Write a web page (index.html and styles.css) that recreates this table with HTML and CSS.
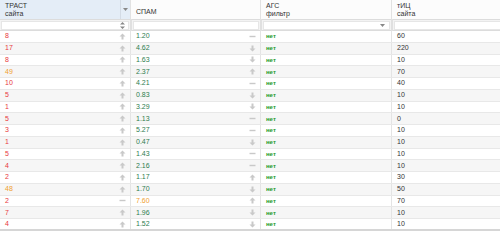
FILE: index.html
```html
<!DOCTYPE html>
<html lang="ru">
<head>
<meta charset="utf-8">
<title>Сайты</title>
<link rel="stylesheet" href="styles.css">
</head>
<body>
<svg width="0" height="0" class="defs">
	<symbol id="up" viewBox="0 0 7 7"><path d="M3.5 0.5 L0.5 3.5 H2.5 V6.5 H4.5 V3.5 H6.5 Z"/></symbol>
	<symbol id="down" viewBox="0 0 7 7"><path d="M3.5 6.5 L0.5 3.5 H2.5 V0.5 H4.5 V3.5 H6.5 Z"/></symbol>
	<symbol id="same" viewBox="0 0 7 7"><rect x="0.5" y="2.8" width="6" height="1.4"/></symbol>
</svg>
<table class="grid">
	<thead>
		<tr class="head">
			<th class="c1 sorted"><div class="th-in"><span>ТРАСТ<br>сайта</span><span class="drop"><svg width="5" height="3" viewBox="0 0 5 3"><path d="M0 0 H5 L2.5 3 Z"/></svg></span></div></th>
			<th class="c2"><div class="th-in low"><span>СПАМ</span></div></th>
			<th class="c3"><div class="th-in"><span>АГС<br>фильтр</span></div></th>
			<th class="c4"><div class="th-in"><span>тИЦ<br>сайта</span></div></th>
		</tr>
		<tr class="filter">
			<td class="c1"><div class="box"><svg class="spin" width="5" height="7" viewBox="0 0 5 7"><path d="M2.5 0 L5 2.6 H0 Z M2.5 7 L5 4.4 H0 Z"/></svg></div></td>
			<td class="c2"><div class="box"></div></td>
			<td class="c3"><div class="box"><svg class="sel" width="5" height="3" viewBox="0 0 5 3"><path d="M0 0 H5 L2.5 3 Z"/></svg></div></td>
			<td class="c4"><div class="box"></div></td>
		</tr>
	</thead>
	<tbody>
		<tr><td class="c1"><div class="cell"><span class="red">8</span><svg class="ico"><use href="#up"/></svg></div></td><td class="c2"><div class="cell"><span class="grn">1.20</span><svg class="ico"><use href="#same"/></svg></div></td><td class="c3"><span class="no">нет</span></td><td class="c4">60</td></tr>
		<tr><td class="c1"><div class="cell"><span class="red">17</span><svg class="ico"><use href="#up"/></svg></div></td><td class="c2"><div class="cell"><span class="grn">4.62</span><svg class="ico"><use href="#down"/></svg></div></td><td class="c3"><span class="no">нет</span></td><td class="c4">220</td></tr>
		<tr><td class="c1"><div class="cell"><span class="red">8</span><svg class="ico"><use href="#up"/></svg></div></td><td class="c2"><div class="cell"><span class="grn">1.63</span><svg class="ico"><use href="#down"/></svg></div></td><td class="c3"><span class="no">нет</span></td><td class="c4">10</td></tr>
		<tr><td class="c1"><div class="cell"><span class="org">49</span><svg class="ico"><use href="#up"/></svg></div></td><td class="c2"><div class="cell"><span class="grn">2.37</span><svg class="ico"><use href="#up"/></svg></div></td><td class="c3"><span class="no">нет</span></td><td class="c4">70</td></tr>
		<tr><td class="c1"><div class="cell"><span class="red">10</span><svg class="ico"><use href="#up"/></svg></div></td><td class="c2"><div class="cell"><span class="grn">4.21</span><svg class="ico"><use href="#same"/></svg></div></td><td class="c3"><span class="no">нет</span></td><td class="c4">40</td></tr>
		<tr><td class="c1"><div class="cell"><span class="red">5</span><svg class="ico"><use href="#up"/></svg></div></td><td class="c2"><div class="cell"><span class="grn">0.83</span><svg class="ico"><use href="#down"/></svg></div></td><td class="c3"><span class="no">нет</span></td><td class="c4">10</td></tr>
		<tr><td class="c1"><div class="cell"><span class="red">1</span><svg class="ico"><use href="#up"/></svg></div></td><td class="c2"><div class="cell"><span class="grn">3.29</span><svg class="ico"><use href="#down"/></svg></div></td><td class="c3"><span class="no">нет</span></td><td class="c4">10</td></tr>
		<tr><td class="c1"><div class="cell"><span class="red">5</span><svg class="ico"><use href="#up"/></svg></div></td><td class="c2"><div class="cell"><span class="grn">1.13</span><svg class="ico"><use href="#same"/></svg></div></td><td class="c3"><span class="no">нет</span></td><td class="c4">0</td></tr>
		<tr><td class="c1"><div class="cell"><span class="red">3</span><svg class="ico"><use href="#up"/></svg></div></td><td class="c2"><div class="cell"><span class="grn">5.27</span><svg class="ico"><use href="#same"/></svg></div></td><td class="c3"><span class="no">нет</span></td><td class="c4">10</td></tr>
		<tr><td class="c1"><div class="cell"><span class="red">1</span><svg class="ico"><use href="#up"/></svg></div></td><td class="c2"><div class="cell"><span class="grn">0.47</span><svg class="ico"><use href="#down"/></svg></div></td><td class="c3"><span class="no">нет</span></td><td class="c4">10</td></tr>
		<tr><td class="c1"><div class="cell"><span class="red">5</span><svg class="ico"><use href="#up"/></svg></div></td><td class="c2"><div class="cell"><span class="grn">1.43</span><svg class="ico"><use href="#same"/></svg></div></td><td class="c3"><span class="no">нет</span></td><td class="c4">10</td></tr>
		<tr><td class="c1"><div class="cell"><span class="red">4</span><svg class="ico"><use href="#up"/></svg></div></td><td class="c2"><div class="cell"><span class="grn">2.16</span><svg class="ico"><use href="#same"/></svg></div></td><td class="c3"><span class="no">нет</span></td><td class="c4">10</td></tr>
		<tr><td class="c1"><div class="cell"><span class="red">2</span><svg class="ico"><use href="#up"/></svg></div></td><td class="c2"><div class="cell"><span class="grn">1.17</span><svg class="ico"><use href="#up"/></svg></div></td><td class="c3"><span class="no">нет</span></td><td class="c4">30</td></tr>
		<tr><td class="c1"><div class="cell"><span class="org">48</span><svg class="ico"><use href="#up"/></svg></div></td><td class="c2"><div class="cell"><span class="grn">1.70</span><svg class="ico"><use href="#down"/></svg></div></td><td class="c3"><span class="no">нет</span></td><td class="c4">50</td></tr>
		<tr><td class="c1"><div class="cell"><span class="red">2</span><svg class="ico"><use href="#same"/></svg></div></td><td class="c2"><div class="cell"><span class="org">7.60</span><svg class="ico"><use href="#up"/></svg></div></td><td class="c3"><span class="no">нет</span></td><td class="c4">70</td></tr>
		<tr><td class="c1"><div class="cell"><span class="red">7</span><svg class="ico"><use href="#up"/></svg></div></td><td class="c2"><div class="cell"><span class="grn">1.96</span><svg class="ico"><use href="#down"/></svg></div></td><td class="c3"><span class="no">нет</span></td><td class="c4">10</td></tr>
		<tr><td class="c1"><div class="cell"><span class="red">4</span><svg class="ico"><use href="#up"/></svg></div></td><td class="c2"><div class="cell"><span class="grn">1.52</span><svg class="ico"><use href="#down"/></svg></div></td><td class="c3"><span class="no">нет</span></td><td class="c4">10</td></tr>
	</tbody>
</table>
</body>
</html>
```
FILE: styles.css
```css
body {
	margin: 0;
	background: #fff;
	font-family: "Liberation Sans", Arial, sans-serif;
	font-size: 7px;
	color: #333;
}

.defs {
	position: absolute;
}

.grid {
	width: 500px;
	border-collapse: collapse;
	table-layout: fixed;
	border-bottom: 2px solid #d6d6d6;
}

.c1 {width: 130px;}
.c2 {width: 129px;}
.c3 {width: 130px;}
.c4 {width: 111px;}

th, td {
	padding: 0;
	text-align: left;
	vertical-align: middle;
}

.head th {
	height: 19px;
	font-weight: normal;
	color: #333;
	background: #fcfcfc;
	border-right: 1px solid #e2e2e2;
	border-bottom: 1px solid #dcdcdc;
}
.head th.sorted {background: #e4edf7;}

.th-in {
	display: flex;
	justify-content: space-between;
	align-items: center;
	height: 19px;
	padding-left: 5px;
	line-height: 8px;
}
.th-in.low {align-items: flex-end; padding-bottom: 3px; box-sizing: border-box;}

.drop {
	display: flex;
	justify-content: center;
	align-items: center;
	width: 9px;
	height: 19px;
	border-left: 1px solid #d3dbe5;
	fill: #888;
}

.filter td {
	height: 10px;
	background: #f3f3f3;
	border-right: 2px solid #e0e0e0;
	border-bottom: 1px solid #dcdcdc;
}
.filter td:last-child {border-right: none;}

.box {
	display: flex;
	justify-content: flex-end;
	align-items: center;
	height: 9px;
	margin: 0 1px;
	background: #fff;
	border: 1px solid #e6e6e6;
	box-sizing: border-box;
}

.spin {
	fill: #888;
	margin-right: 3px;
}
.sel {
	fill: #888;
	margin-right: 4px;
}

tbody tr {height: 11.75px;}
tbody tr:nth-child(even) {background: #f6f6f6;}
tbody td {
	border-bottom: 1px solid #e8e8e8;
	border-right: 1px solid #e4e4e4;
	line-height: 10px;
}
tbody td.c1, tbody td.c2, tbody td.c3, tbody td.c4 {padding-left: 5px;}
tbody td.c4 {border-right: none;}
tbody td.c1, tbody td.c2 {padding-right: 4px;}

.cell {
	display: flex;
	justify-content: space-between;
	align-items: center;
}

.ico {
	width: 7px;
	height: 7px;
	fill: #c9c9c9;
}

.red {color: #e8383c;}
.org {color: #f0a030;}
.grn {color: #2e7d4f;}
.no {
	color: #229a2a;
	font-size: 6px;
	font-weight: bold;
}
```
